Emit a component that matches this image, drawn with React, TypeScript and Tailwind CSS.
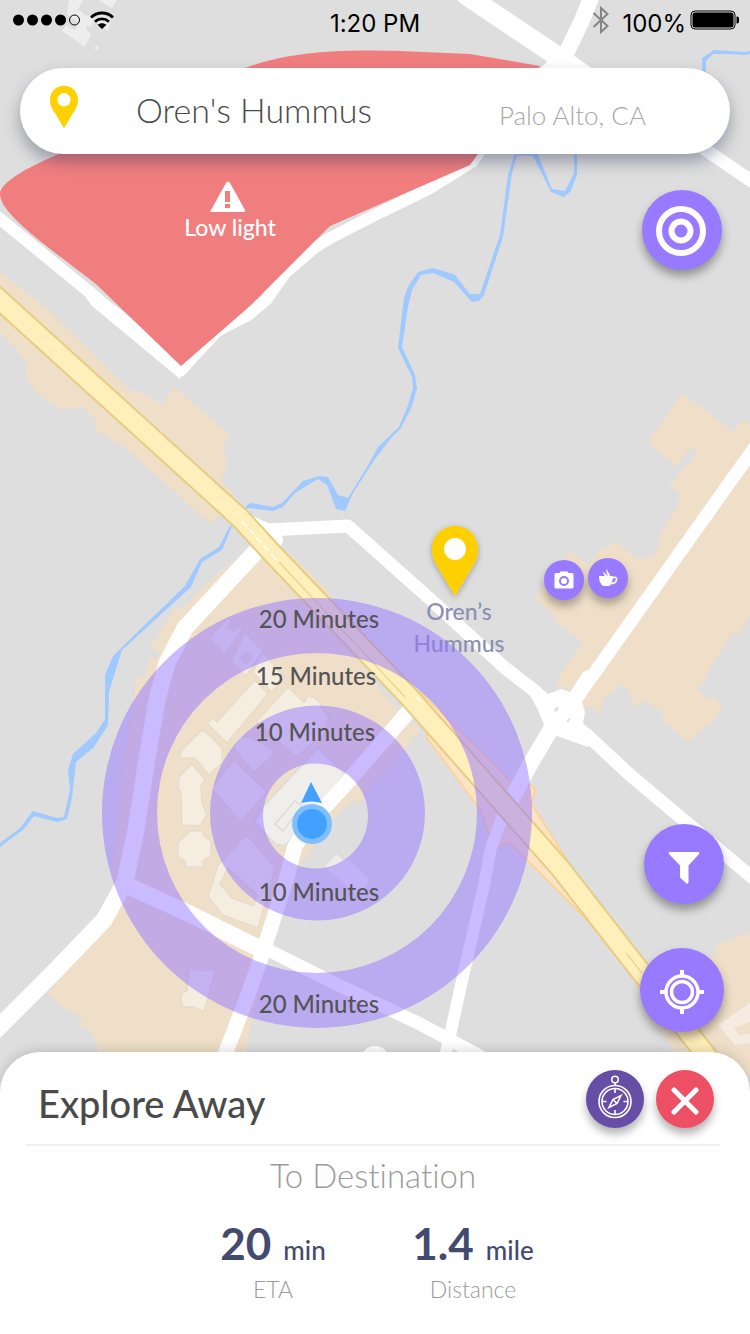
import type { ReactNode } from "react";

const RIVER_MID =
  "M516 150L508 175L500 235L480 294L470 294L455 275L453 274L433 268L418 272L409 285L404 297L398 348L412 377L413 388L408 405L399 427L378 447L367 467L348 498L338 495L328 477L320 476L303 481L282 503L273 507L252 503L248 504L243 511L248 508L273 511L283 507L295 493L318 479L327 485L336 509L345 511L353 493L375 459L392 437L401 428L412 406L417 388L415 375L402 347L408 307L412 290L421 275L433 273L454 282L472 302L479 301L484 295L503 237L512 173L517 155L533 156L551 192L564 197L571 191L577 175V150H574V173L565 191L552 189L536 150Z";
const RIVER_LOWER =
  "M230 526L219 547L200 559L185 586L122 647L113 656L105 675L105 719L97 732L73 754L68 770L70 790L64 817L57 818L33 811L20 828L0 843V847L24 829L34 816L57 822L67 819L72 798L76 762L94 747L108 725L109 692L122 650L191 587L202 562L222 550L232 526Z";
const HIGHWAY = "M-10 291L240 518L272 553L410 698L500 800L560 868L630 958L710 1060";

const BUILDINGS = [
  "M255 680L268 694L227 743L207 723L213 718L217 722Z",
  "M202 730L207 733L222 748L222 763L209 775L195 758L179 758L182 750Z",
  "M192 764L205 780L201 785L202 803L207 815L200 826L182 825L181 793L178 788L179 777Z",
  "M190 831L203 831L204 836L211 841L211 856L203 861L203 867L186 867L185 861L178 857L178 842L185 836Z",
  "M245 836L250 838L275 868L258 928L223 915L208 897L218 865ZM228 868L220 884L232 898L254 906L257 895Z",
  "M234 760L267 792L241 822L211 788Z",
  "M240 736L252 738L273 750L272 756L254 772L233 748Z",
  "M288 687L304 702L309 695L319 701L322 708L329 718L326 726L325 733L296 757L256 722Z",
  "M318 748L345 774L285 846L275 844L255 822L262 808Z",
  "M228 618L232 621L228 627L234 631L240 625L243 629L225 655L210 640L214 632Z",
  "M245 632L263 651L246 676L231 662ZM246 652L252 658L246 664L241 658Z",
  "M262 652L285 677L272 692L253 673Z",
  "M189 968L200 971L212 969L215 972L204 1012L193 1007L183 1007L181 999L182 993L187 991Z",
];

const WHITE_ROADS: { d: string; w: number }[] = [
  { d: "M-5 215L92 294L180 371L217 331L248 315L266 300L285 273L314 248L330 238L375 215L430 188L472 162L520 95L560 58", w: 12 },
  { d: "M462 -8L565 62L640 105L760 187", w: 13 },
  { d: "M466 -5L560 58L600 86", w: 20 },
  { d: "M592 -5L583 18L562 62", w: 16 },
  { d: "M760 440L715 503L588 682", w: 13 },
  { d: "M245 520L268 530L348 526L430 599L505 668L536 692", w: 13 },
  { d: "M258 533L274 540", w: 18 },
  { d: "M586 734L630 775L760 884", w: 13 },
  { d: "M555 722L528 768L505 812", w: 16 },
  { d: "M505 810L491 848L484 885L461 985L449 1040L443 1065", w: 12 },
  { d: "M264 543L185 628L167 663L157 700L146 765L136 830L125 882L104 920L55 971L-6 1032", w: 17 },
  { d: "M126 885L190 914L262 950", w: 17 },
  { d: "M258 945L330 981L420 1024L480 1056", w: 13 },
  { d: "M408 712L345 785L308 825L295 846L286 880L262 955L248 995L222 1062", w: 15 },
];

function Pin({ className }: { className: string }) {
  return (
    <svg viewBox="0 0 46 70" className={className} aria-hidden="true">
      <path d="M23 0C10 0 0 10 0 23c0 8 3 14 7 20l16 27 16-27c4-6 7-12 7-20C46 10 36 0 23 0Z" fill="#ffd000" />
      <circle cx="23" cy="23" r="11" fill="#fff" />
    </svg>
  );
}

function CityMap() {
  return (
    <svg
      viewBox="0 0 750 1334"
      preserveAspectRatio="xMidYMid slice"
      className="absolute inset-0 h-full w-full font-['Lato',sans-serif]"
      role="img"
      aria-label="Walking time map around the current position"
    >
      <defs>
        <filter id="pin-shadow" x="-30%" y="-30%" width="160%" height="160%">
          <feDropShadow dx="0" dy="2" stdDeviation="3" floodColor="#000" floodOpacity="0.3" />
        </filter>
      </defs>
      <rect width="750" height="1334" fill="#dedede" />

      <g fill="#efdfc8">
        <path d="M0 272L45 307L128 389L142 393L162 404L175 387L230 435L222 448L228 464L221 480L233 493L215 520L210 523L178 495L123 446L109 438L107 432L104 436L93 427L96 421L82 406L77 408L70 407L60 409L38 395L26 379L27 362L18 353L17 348L8 342L0 332Z" />
        <path d="M682 393L695 404L700 405L733 432L743 420L750 424V615L738 635L733 632L707 673L705 675L707 680L697 690L710 700L713 697L723 706L709 727L706 725L688 742L662 720L664 714L645 700L642 704L634 706L628 690L621 685L607 697L604 697L600 714L589 706L584 710L570 690L557 686L560 675L583 642L570 633L555 620L555 617L535 599L550 578L570 551L588 565L600 550L616 542L640 561L645 556L652 558L660 543L658 539L668 520L680 503L678 501L681 496L670 485L680 472L690 462L697 452L691 447L676 466L648 442Z" />
        <path d="M268 540L222 570L180 610L176 607L151 646L160 655L156 660L151 656L144 678L137 676L132 710L119 790L112 872L120 900L104 925L48 993L62 1007L82 1017L80 1027L91 1030L96 1040L100 1060H243L267 955L296 878L306 852L318 835L352 800L358 805L415 730L380 690L290 560Z" />
        <path d="M293 556L330 592L326 604L285 565Z" />
        <path d="M750 932L714 946L716 954L690 970L656 1024L680 1058L705 1075L750 1075Z" />
      </g>
      <path d="M750 1003L718 1025L735 1045L750 1043V1034L740 1035L734 1028L750 1022Z" fill="#f5ebe0" />

      <path d="M318 836L354 799L360 806L420 728L520 880L480 1060H245L267 955L296 878Z" fill="#dedede" />
      <path d="M352 794L359 803L420 730L405 715Z" fill="#efdfc8" />
      <path d="M300 840L320 837L302 862L288 895L280 893Z" fill="#efdfc8" />

      <path
        fill="#ededed"
        d="M69 0L83 0L78 9L90 19L86 29L91 34L85 47L62 31L66 25L75 30L79 23L67 14ZM98 0H117L112 8L103 3ZM101 14L111 20L108 31L97 24ZM87 15L94 18L91 27L84 23ZM97 45L99 48L96 50L94 48Z"
      />
      <path fill="#ededed" d="M336 854L343 860L349 860L370 881L358 896L325 867Z" />

      <g fill="#a0caff">
        <path d={RIVER_MID} />
        <path d={RIVER_LOWER} />
        <path d="M750 51L745 52L730 51L714 50L702 58V80H706V61L713 54L730 54L743 55L750 54Z" />
      </g>

      <g fill="#fce3c4" stroke="#ffd18c" strokeWidth="1.5">
        <path d="M413 690L420 692L500 770L510 782L526 785L531 785L535 790L531 803L574 871L560 865L505 800Z" />
        <path d="M427 733L427 738L482 812L487 830L497 848L505 843L512 845L585 918L617 956L612 935L500 800Z" />
      </g>

      <g fill="none" stroke="#fff" strokeLinejoin="round" strokeLinecap="round">
        {WHITE_ROADS.map((road) => (
          <path key={road.d} d={road.d} strokeWidth={road.w} />
        ))}
      </g>
      <path d="M97 292L120 309L185 364L180 379L92 306L86 298Z" fill="#fff" />
      <path
        d="M535 683L548 694L561 689L570 692L583 672L597 667L595 683L582 702L585 712L583 723L595 735L588 747L557 736L545 727L537 708L528 692Z"
        fill="#fff"
      />
      <path d="M555 709L558 707L557 711L554 711ZM567 721L570 718L568 722Z" fill="#dedede" stroke="#dedede" />
      <circle cx="375" cy="1060" r="14" fill="#fff" />

      <g fillRule="evenodd" fill="#f5eee0" stroke="#e7dccb" strokeWidth="1.5">
        {BUILDINGS.map((d) => (
          <path key={d} d={d} />
        ))}
      </g>
      <path d="M318 748L345 774L285 846L275 844L255 822L262 808Z" fill="#f0eeea" stroke="#dcdcdc" strokeWidth="1.5" />
      <path d="M295 801L302 806L283 831L275 824Z" fill="none" stroke="#dcdcdc" strokeWidth="1.5" />
      <path d="M408 712L345 785L308 825L295 846L286 880" fill="none" stroke="#fff" strokeWidth="15" />

      <path d={HIGHWAY} fill="none" stroke="#e7cd82" strokeWidth="22" />
      <path d={HIGHWAY} fill="none" stroke="#ffefba" strokeWidth="18" />
      <path d="M279 562L405 697M626 953L642 973" fill="none" stroke="#ecd690" strokeWidth="1.5" />
      <path d="M242 521L278 562M416 697L422 703" fill="none" stroke="#fff" strokeWidth="1.5" strokeDasharray="7 4" />

      <path
        d="M181 366L97 285C60 255 0 216 0 194C0 181 34 164 64 152C150 108 200 80 248 67C290 52 335 49 400 51L470 54L540 66L478 154L470 165L330 226L250 306Z"
        fill="#f17e7f"
      />
      <path d="M226 183Q228 180 230 183L245 210Q246 212 243 212H212Q209 212 211 210Z" fill="#fff" />
      <path d="M225 191H230V202H225ZM225 204H230V208H225Z" fill="#f17e7f" />
      <text x="230" y="236" textAnchor="middle" className="fill-white text-[23px] font-medium">Low light</text>

      <g textAnchor="middle" className="fill-[#8a8fb2] text-[23px] font-medium">
        <text x="459" y="620">Oren’s</text>
        <text x="459" y="652">Hummus</text>
      </g>

      <g fill="#9576ff" fillOpacity="0.5" fillRule="evenodd">
        <path d="M102 813a215 215 0 1 0 430 0a215 215 0 1 0 -430 0ZM157 813a160 160 0 1 0 320 0a160 160 0 1 0 -320 0Z" />
        <path d="M210 813a107 107 0 1 0 215 0a107 107 0 1 0 -215 0ZM263 816a52 52 0 1 0 105 0a52 52 0 1 0 -105 0Z" />
      </g>
      <g textAnchor="middle" className="fill-[#555555] text-[24px] font-medium">
        <text x="319" y="628">20 Minutes</text>
        <text x="316" y="685">15 Minutes</text>
        <text x="315" y="741">10 Minutes</text>
        <text x="319" y="901">10 Minutes</text>
        <text x="319" y="1013">20 Minutes</text>
      </g>

      <path d="M311 782L322 803Q312 800 301 803Z" fill="#42a1ff" />
      <circle cx="312" cy="824" r="20" fill="#80bfff" />
      <circle cx="312" cy="824" r="15" fill="#42a1ff" />

      <g filter="url(#pin-shadow)">
        <path d="M455 526C442 526 432 536 432 549c0 8 3 14 7 20l16 27 16-27c4-6 7-12 7-20C478 536 468 526 455 526Z" fill="#ffd000" />
      </g>
      <circle cx="455" cy="549" r="11" fill="#fff" />
    </svg>
  );
}

function RoundButton({ label, className, children }: { label: string; className: string; children: ReactNode }) {
  return (
    <button type="button" aria-label={label} className={`flex shrink-0 items-center justify-center rounded-full ${className}`}>
      {children}
    </button>
  );
}

function StatusBar() {
  return (
    <header className="grid h-12 grid-cols-3 items-center px-3 font-['Inter',sans-serif] text-[24px] text-black">
      <div className="flex items-center gap-2 pb-2">
        <svg viewBox="0 0 69 12" className="h-3 w-[69px]" aria-label="Signal">
          <circle cx="6.500" cy="6" r="5.5" />
          <circle cx="20.500" cy="6" r="5.5" />
          <circle cx="34.500" cy="6" r="5.5" />
          <circle cx="48.500" cy="6" r="5.5" />
          <circle cx="62.500" cy="6" r="5" fill="none" stroke="#000" />
        </svg>
        <svg viewBox="0 0 26 18" className="h-[18px] w-[26px]" aria-label="Wi-Fi">
          <path d="M2 6.5C8 0.500 18 0.500 24 6.500M6 10.700C10 7 16 7 20 10.700" fill="none" stroke="#000" strokeWidth="2.8" />
          <path d="M13 18L8.500 13.700C11 11.600 15 11.600 17.500 13.700Z" />
        </svg>
      </div>
      <span className="text-center whitespace-nowrap">1:20 PM</span>
      <div className="-mr-[2px] flex items-center justify-end gap-1">
        <svg viewBox="0 0 18 28" className="mr-2 mb-2 h-7 w-[18px]" aria-label="Bluetooth">
          <path d="M1.500 7L15.500 20L9 26V2L15.500 8L1.500 21" fill="none" stroke="#868686" strokeWidth="2" />
        </svg>
        <span>100%</span>
        <svg viewBox="0 0 50 20" className="mb-2 h-5 w-[50px]" aria-label="Battery full">
          <rect x="1" y="1" width="44" height="18" rx="4" fill="none" stroke="#000" />
          <rect x="2.500" y="2.500" width="41" height="15" rx="2.500" />
          <path d="M46.500 6.500C49 6.500 49 8 49 10S49 13.500 46.500 13.500Z" />
        </svg>
      </div>
    </header>
  );
}

function Stat({ value, unit, label }: { value: string; unit: string; label: string }) {
  return (
    <div className="flex w-[200px] flex-col-reverse items-center">
      <dt className="text-[23px] leading-[34px] font-light text-[#9b9b9b]">{label}</dt>
      <dd className="flex items-baseline gap-3 text-[#434a6f]">
        <span className="text-[44px] leading-[58px] font-bold">{value}</span>
        <span className="text-[26px] font-medium">{unit}</span>
      </dd>
    </div>
  );
}

export default function App() {
  return (
    <div className="relative flex min-h-screen flex-col overflow-hidden bg-[#dedede] font-['Lato',sans-serif] [font-variant-ligatures:none]">
      <CityMap />

      <div className="relative flex flex-1 flex-col">
        <StatusBar />

        <form className="mx-5 mt-5 flex h-[86px] items-center rounded-full bg-white pr-[84px] pl-[30px] shadow-[0_8px_16px_rgba(50,54,90,0.4)]">
          <Pin className="mb-2 h-11 w-7 shrink-0" />
          <input
            type="text"
            aria-label="Destination"
            defaultValue="Oren's Hummus"
            className="ml-[58px] min-w-0 flex-1 bg-transparent pb-1 text-[34px] font-light text-[#4a4a4a] outline-none"
          />
          <span className="mt-2 text-[26px] font-light whitespace-nowrap text-[#a8a8a8]">Palo Alto, CA</span>
        </form>

        <div className="flex flex-1 flex-col items-end justify-between gap-11 px-7 pt-9 pb-5">
          <RoundButton label="Show travel rings" className="h-20 w-20 bg-[#977aff] shadow-[0_6px_10px_rgba(0,0,0,0.35)]">
            <svg viewBox="0 0 52 52" className="h-[52px] w-[52px]" fill="none" stroke="#fff" strokeWidth="6" aria-hidden="true">
              <circle cx="25" cy="27" r="22" />
              <circle cx="25" cy="27" r="9.500" />
            </svg>
          </RoundButton>
          <div className="-mr-[2px] flex flex-col items-end gap-11">
            <RoundButton label="Filter" className="h-20 w-20 bg-[#977aff] shadow-[0_6px_10px_rgba(0,0,0,0.35)]">
              <svg viewBox="0 0 32 32" className="mt-2 h-8 w-8" aria-hidden="true">
                <path d="M1.500 0H30.500Q32 0 31 2L20.500 13.500V30Q20 32.500 18.500 31.500L12 25.500V13.500L1 2Q0 0 1.500 0Z" fill="#fff" />
              </svg>
            </RoundButton>
            <RoundButton label="Center on my location" className="h-[84px] w-[84px] bg-[#977aff] shadow-[0_6px_10px_rgba(0,0,0,0.35)]">
              <svg viewBox="0 0 44 44" className="mt-1 h-11 w-11" fill="none" stroke="#fff" aria-hidden="true">
                <circle cx="22" cy="22" r="16" strokeWidth="3.500" />
                <circle cx="22" cy="22" r="10.500" strokeWidth="3.500" />
                <path d="M22 0V7M22 37V44M0 22H7M37 22H44" strokeWidth="4" />
              </svg>
            </RoundButton>
          </div>
        </div>
      </div>

      <RoundButton label="Photo spot" className="absolute top-[42%] left-[72.5%] h-10 w-10 bg-[#977aff] shadow-[0_6px_8px_rgba(0,0,0,0.3)]">
        <svg viewBox="0 0 20 18" className="h-[18px] w-5" aria-hidden="true">
          <path d="M2 2H5.500L6.500 0.500H13.500L14.500 2H18Q19.500 2 19.500 3.500V16Q19.500 17.500 18 17.500H2Q0.500 17.500 0.500 16V3.500Q0.500 2 2 2Z" fill="#fff" />
          <circle cx="10" cy="10" r="4" fill="#fff" stroke="#977aff" strokeWidth="2" />
        </svg>
      </RoundButton>
      <RoundButton label="Coffee" className="absolute top-[41.8%] left-[78.4%] h-10 w-10 bg-[#977aff] shadow-[0_6px_8px_rgba(0,0,0,0.3)]">
        <svg viewBox="0 0 20 20" className="h-5 w-5" aria-hidden="true">
          <path d="M1 8H15C15 13 13.500 16 11.500 18H5C2.500 16 1 13 1 8Z" fill="#fff" />
          <path d="M14.500 10C17 8.500 19 9.500 18.500 12C18 14.500 15.500 15.500 13 15.500" fill="none" stroke="#fff" strokeWidth="1.600" />
          <path d="M5.500 3.500C4.500 6 7 6 6.500 8.500H9C9.500 6 6.500 6 5.500 3.500ZM9.500 0.500C6.500 4 10 5 9.500 8.500H11.500C13 5 8 4 9.500 0.500Z" fill="#fff" />
        </svg>
      </RoundButton>

      <section className="relative rounded-t-[40px] bg-white pt-[18px] pr-[30px] pb-7 pl-[26px] shadow-[0_-2px_12px_rgba(0,0,0,0.15)]">
        <div className="flex items-center justify-between border-b-2 border-[#f0f0f0] pr-[6px] pb-4 pl-3">
          <h1 className="mt-2 text-[38px] leading-[50px] font-medium text-[#4a4a4a]">Explore Away</h1>
          <div className="flex gap-3">
            <RoundButton label="Compass" className="h-[58px] w-[58px] bg-[#664ea6] shadow-[0_6px_8px_rgba(0,0,0,0.3)]">
              <svg viewBox="0 0 36 44" className="mb-1 h-11 w-9" fill="none" stroke="#fff" strokeWidth="1.600" aria-hidden="true">
                <circle cx="18" cy="4.500" r="3.300" />
                <path d="M18 8V11" />
                <circle cx="18" cy="26.500" r="16" />
                <circle cx="18" cy="26.500" r="13" />
                <path d="M18 14V18M18 35V39M5.500 26.500H9.500M26.500 26.500H30.500M24 20.500L20 28.500L12 32.500L16 24.500ZM16 24.500L20 28.500" />
              </svg>
            </RoundButton>
            <RoundButton label="Close" className="h-[58px] w-[58px] bg-[#ed4f65] shadow-[0_6px_8px_rgba(0,0,0,0.3)]">
              <svg viewBox="0 0 28 28" className="mt-1 h-7 w-7" aria-hidden="true">
                <path d="M3 3L25 25M25 3L3 25" fill="none" stroke="#fff" strokeWidth="5" strokeLinecap="round" />
              </svg>
            </RoundButton>
          </div>
        </div>
        <h2 className="mt-1.5 text-center text-[33px] leading-[46px] font-light text-[#9b9b9b]">To Destination</h2>
        <dl className="mt-4 flex justify-center">
          <Stat value="20" unit="min" label="ETA" />
          <Stat value="1.4" unit="mile" label="Distance" />
        </dl>
      </section>
    </div>
  );
}
